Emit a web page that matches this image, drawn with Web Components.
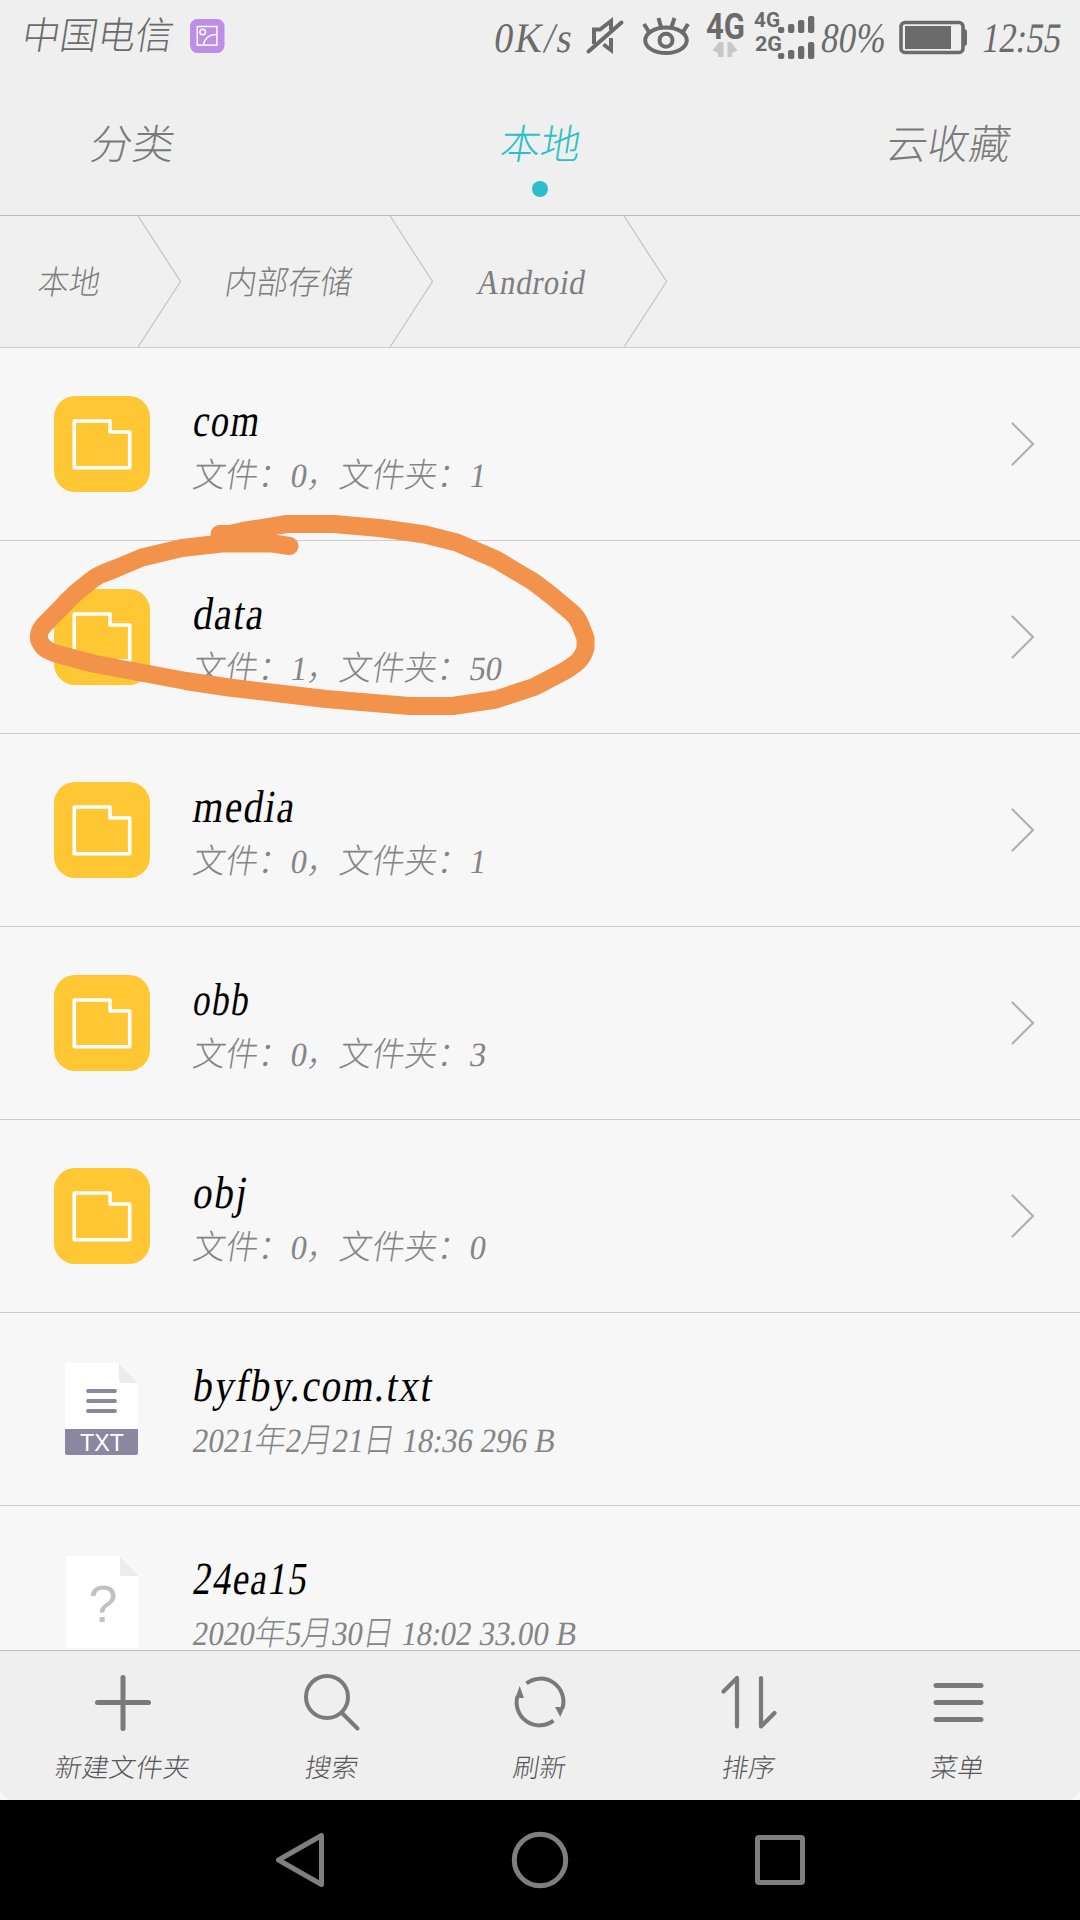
<!DOCTYPE html>
<html lang="zh-CN">
<head>
<meta charset="utf-8">
<title>文件管理</title>
<style>
  body {
    margin: 0;
    width: 1080px;
    height: 1920px;
    overflow: hidden;
    font-family: "Liberation Serif", "Noto Sans CJK SC", serif;
    font-weight: 300;
  }
</style>
</head>
<body>
<file-manager></file-manager>

<script>
// condensed, slanted text squeezed to the width given in the "w" attribute
class SlantText extends HTMLElement {
  constructor() {
    super();
    this.attachShadow({ mode: "open" });
    this.shadowRoot.innerHTML = `
<style>
  :host {
    display: block;
    flex: none;
    white-space: nowrap;
  }

  span {
    display: inline-block;
    vertical-align: top;
    transform-origin: 0 calc(50% + 0.34em);
  }
</style>
<span><slot></slot></span>
`;
  }

  connectedCallback() {
    const span = this.shadowRoot.querySelector("span");
    const w = Number(this.getAttribute("w"));
    const scale = w / span.offsetWidth;
    this.style.width = w + "px";
    span.style.transform = `translateX(-1.5px) skewX(-9deg) scaleX(${scale})`;
  }
}
window.customElements.define("slant-text", SlantText);

class StatusBar extends HTMLElement {
  constructor() {
    super();
    this.attachShadow({ mode: "open" });
    this.shadowRoot.innerHTML = `
<style>
  :host {
    display: flex;
    height: 76px;
    padding: 0 19px 0 22px;
    box-sizing: border-box;
    color: #6b6b6b;
    font-size: 42px;
    line-height: 76px;
  }

  .carrier {
    font-size: 38px;
    line-height: 72px;
    margin-right: 17px;
  }

  .speed {
    margin-left: auto;
    letter-spacing: 2px;
  }

  svg {
    flex: none;
    display: block;
  }

  text {
    font-family: Roboto, sans-serif;
    font-weight: 700;
    fill: #6b6b6b;
  }
</style>
<slant-text class="carrier" w="151">中国电信</slant-text>
<svg width="35" height="76" viewBox="190 0 35 76" fill="none" stroke="#fff" stroke-width="1.5">
  <rect x="190" y="19" width="34.5" height="34" rx="7.5" fill="#bd8de8" stroke="none"/>
  <rect x="197.3" y="26.5" width="19.6" height="18.6"/>
  <circle cx="202.7" cy="32" r="2.8"/>
  <path d="M203.5 45C204 39 209 34.5 216.5 34.5"/>
</svg>
<slant-text class="speed" w="79">0K/s</slant-text>
<svg width="248" height="76" viewBox="573 0 248 76" fill="none" stroke="#6b6b6b" stroke-width="4">
  <path d="M594 44V29.500H600L611 21V30M611 38V50L603.500 44.500"/>
  <path d="M588.500 51.500L621.500 22.500" stroke-linecap="round"/>
  <ellipse cx="666" cy="40.300" rx="20.800" ry="12.800"/>
  <circle cx="666" cy="40.300" r="6.500"/>
  <path d="M649 32L644 24M661 27L658.500 18M671.500 27L674.500 18M683 32L688 24"/>
  <g stroke="none">
    <text x="706" y="39" font-size="37" textLength="39" lengthAdjust="spacingAndGlyphs">4G</text>
    <path d="M712.500 50.500L719 42H723.500V57H718V53ZM737.500 50.500L731 42H727.500V57H732V53Z" fill="#c8c8c8"/>
    <text x="754" y="27" font-size="21" textLength="26" lengthAdjust="spacingAndGlyphs">4G</text>
    <text x="755" y="51" font-size="21" textLength="27" lengthAdjust="spacingAndGlyphs">2G</text>
    <g fill="#6b6b6b">
      <rect x="778" y="27" width="6.300" height="6" rx="2"/>
      <rect x="788" y="24" width="6.300" height="9" rx="2"/>
      <rect x="798" y="20" width="6.300" height="13" rx="2"/>
      <rect x="808" y="16" width="6.300" height="17" rx="2"/>
      <rect x="778" y="53" width="6.300" height="6" rx="2"/>
      <rect x="788" y="50" width="6.300" height="9" rx="2"/>
      <rect x="798" y="46" width="6.300" height="13" rx="2"/>
      <rect x="808" y="42" width="6.300" height="17" rx="2"/>
    </g>
  </g>
</svg>
<slant-text w="64">80%</slant-text>
<svg width="97" height="76" viewBox="884 0 97 76">
  <rect x="900" y="22.500" width="62" height="30" rx="4" fill="none" stroke="#6b6b6b" stroke-width="3.600"/>
  <rect x="904" y="26" width="46" height="23" fill="#6b6b6b"/>
  <path d="M963 29Q966 29 966 32V43Q966 46 963 46Z" fill="#6b6b6b"/>
</svg>
<slant-text w="79">12:55</slant-text>
`;
  }
}
window.customElements.define("status-bar", StatusBar);

class TabBar extends HTMLElement {
  constructor() {
    super();
    this.attachShadow({ mode: "open" });
    this.shadowRoot.innerHTML = `
<style>
  :host {
    display: flex;
    justify-content: space-between;
    height: 140px;
    padding: 41px 70px 0 90px;
    box-sizing: border-box;
    border-bottom: 1px solid #bcbcbc;
    color: #7a7a7a;
    font-size: 41px;
    line-height: 56px;
  }

  .active {
    display: flex;
    flex-direction: column;
    align-items: center;
    gap: 8px;
    margin-left: 20px;
    color: #2bc0c9;
  }

  i {
    width: 16px;
    height: 16px;
    border-radius: 50%;
    background: #2bc0c9;
  }
</style>
<slant-text w="84">分类</slant-text>
<div class="active"><slant-text w="80">本地</slant-text><i></i></div>
<slant-text w="124">云收藏</slant-text>
`;
  }
}
window.customElements.define("tab-bar", TabBar);

class PathCrumb extends HTMLElement {
  constructor() {
    super();
    this.attachShadow({ mode: "open" });
    this.shadowRoot.innerHTML = `
<style>
  :host {
    display: flex;
    height: 131px;
    font-size: 33px;
    line-height: 134px;
  }

  svg {
    display: block;
  }
</style>
<slant-text w="${this.getAttribute("w")}">${this.getAttribute("label")}</slant-text>
<svg width="83" height="131" viewBox="0 0 83 131" fill="none" stroke="#c6c6c6" stroke-width="1.3"><path d="M38 0L80.500 65.500L38 131"/></svg>
`;
  }
}
window.customElements.define("path-crumb", PathCrumb);

const icons = {
  folder: `
<svg width="96" height="96" viewBox="0 0 96 96">
  <rect width="96" height="96" rx="21" fill="#ffc734"/>
  <path d="M20.300 25H56V36H75.700V71.700H20.300Z" fill="none" stroke="#fff" stroke-width="3.600" stroke-linejoin="round"/>
</svg>`,
  txt: `
<svg width="96" height="96" viewBox="0 1 96 96">
  <path d="M13 3H65L84 22V69H11V5Q11 3 13 3Z" fill="#fff"/>
  <path d="M65 3L84 23H67Q65 23 65 21Z" fill="#ececec"/>
  <path d="M11 69H84V93Q84 95 82 95H13Q11 95 11 93Z" fill="#8b87a1"/>
  <path d="M34 31H61M34 41H61M34 51H61" stroke="#8b87a1" stroke-width="3.800" stroke-linecap="round"/>
  <text x="26" y="91" font-size="24" textLength="44" lengthAdjust="spacingAndGlyphs" font-family="Liberation Sans, sans-serif" fill="#fff">TXT</text>
</svg>`,
  unknown: `
<svg width="96" height="96" viewBox="0 1 96 96">
  <path d="M14 3H66L85 22V93Q85 95 83 95H14Q12 95 12 93V5Q12 3 14 3Z" fill="#fff"/>
  <path d="M66 3L85 23H68Q66 23 66 21Z" fill="#ececec"/>
  <text x="49" y="69" font-size="52" text-anchor="middle" font-family="Liberation Sans, sans-serif" fill="#c1c1c1">?</text>
</svg>`
};

class FileRow extends HTMLElement {
  constructor() {
    super();
    this.attachShadow({ mode: "open" });
    const kind = this.getAttribute("kind");
    this.shadowRoot.innerHTML = `
<style>
  :host {
    display: flex;
    height: 193px;
    padding: 0 45px 0 54px;
    box-sizing: border-box;
    border-bottom: 1px solid #cdcdcd;
  }

  svg {
    flex: none;
    display: block;
    margin-top: 48px;
  }

  .info {
    flex: 1;
    display: flex;
    flex-direction: column;
    gap: 9px;
    padding: 47px 0 0 43px;
  }

  .name {
    font-size: 46px;
    line-height: 52px;
    font-weight: 400;
    letter-spacing: 2px;
    color: #000;
  }

  .detail {
    font-size: 34px;
    line-height: 40px;
    color: #858585;
  }
</style>
${icons[kind]}
<div class="info">
  <slant-text class="name" w="${this.getAttribute("nw")}">${this.getAttribute("name")}</slant-text>
  <slant-text class="detail" w="${this.getAttribute("dw")}">${this.getAttribute("detail")}</slant-text>
</div>
${kind === "folder" ? `<svg width="24" height="96" viewBox="0 0 24 96" fill="none" stroke="#b0b0b0" stroke-width="2.200" stroke-linecap="round"><path d="M1.500 27.500L22 48L1.500 68.500"/></svg>` : ""}
`;
  }
}
window.customElements.define("file-row", FileRow);

class ToolItem extends HTMLElement {
  constructor() {
    super();
    this.attachShadow({ mode: "open" });
    this.shadowRoot.innerHTML = `
<style>
  :host {
    flex: 1;
    display: flex;
    flex-direction: column;
    align-items: center;
    gap: 17px;
    font-size: 26px;
    line-height: 40px;
    color: #565656;
  }
</style>
<slot></slot>
<slant-text w="${this.getAttribute("w")}">${this.getAttribute("label")}</slant-text>
`;
  }
}
window.customElements.define("tool-item", ToolItem);

class ToolBar extends HTMLElement {
  constructor() {
    super();
    this.attachShadow({ mode: "open" });
    this.shadowRoot.innerHTML = `
<style>
  :host {
    display: block;
    height: 150px;
    background: #f7f7f7;
  }

  div {
    display: flex;
    height: 150px;
    padding: 21px 18px 0;
    box-sizing: border-box;
    border-top: 1px solid #bcbcbc;
    border-radius: 0 0 14px 14px;
    background: #efefef;
  }

  svg {
    display: block;
    fill: none;
    stroke: #7a7a7a;
    stroke-width: 4.500;
    stroke-linecap: round;
    stroke-linejoin: round;
  }
</style>
<div>
  <tool-item label="新建文件夹" w="135">
    <svg width="60" height="60" viewBox="0 0 60 60" style="stroke-width:5"><path d="M31 5.500V56.500M5.500 30.500H56.500"/></svg>
  </tool-item>
  <tool-item label="搜索" w="53">
    <svg width="60" height="60" viewBox="0 0 60 60" style="stroke-width:4"><circle cx="26" cy="25" r="21"/><path d="M41 41L56.500 56.500"/></svg>
  </tool-item>
  <tool-item label="刷新" w="53">
    <svg width="60" height="60" viewBox="0 0 60 60" style="stroke-width:4;stroke-linecap:butt">
      <path d="M16.500 11.300A23 23 0 0 1 52.500 36"/>
      <path d="M43.500 48.700A23 23 0 0 1 7.500 24"/>
      <path d="M9.700 14L14 26L5.500 26ZM50.300 45L45 35L54.500 35Z" fill="#7a7a7a" stroke="none"/>
    </svg>
  </tool-item>
  <tool-item label="排序" w="53">
    <svg width="60" height="60" viewBox="0 0 60 60" style="stroke-width:4.200"><path d="M4.500 19.500L18 6V54.500M42 6V54.500L55.500 41"/></svg>
  </tool-item>
  <tool-item label="菜单" w="53">
    <svg width="60" height="60" viewBox="0 0 60 60" style="stroke-width:5"><path d="M8 13.500H53M8 30.500H53M8 47.500H53"/></svg>
  </tool-item>
</div>
`;
  }
}
window.customElements.define("tool-bar", ToolBar);

class NavKeys extends HTMLElement {
  constructor() {
    super();
    this.attachShadow({ mode: "open" });
    this.shadowRoot.innerHTML = `
<style>
  :host {
    display: flex;
    justify-content: center;
    align-items: center;
    gap: 180px;
    height: 120px;
    background: #000;
  }

  svg {
    fill: none;
    stroke: #7f7f7f;
    stroke-width: 5;
    stroke-linejoin: round;
  }
</style>
<svg width="60" height="60" viewBox="0 0 60 60"><path d="M8.500 30L51.500 5.500V54.500Z"/></svg>
<svg width="60" height="60" viewBox="0 0 60 60"><circle cx="30" cy="30" r="25.700"/></svg>
<svg width="60" height="60" viewBox="0 0 60 60"><rect x="7.500" y="7.500" width="45" height="45" rx="1.500"/></svg>
`;
  }
}
window.customElements.define("nav-keys", NavKeys);

// hand-drawn loop around one of the rows
class MarkerLoop extends HTMLElement {
  constructor() {
    super();
    this.attachShadow({ mode: "open" });
    this.shadowRoot.innerHTML = `
<style>
  :host {
    display: block;
    position: absolute;
    left: 0;
    top: 500px;
    pointer-events: none;
  }

  svg {
    display: block;
  }
</style>
<svg width="620" height="230" viewBox="0 500 620 230">
  <path fill="none" stroke="#f3924a" stroke-width="18" stroke-linecap="round" stroke-linejoin="round" d="M219.500 534H230L243 531L287 524H334L379.600 528L425 534.500L456.700 542.500L496 559.500L533.800 582L552 596L571 612Q577 617 580 624L585.500 638V648Q583 658 575 664Q566 671 557 675L534 687L496 699.500L452.700 706H409.300L326 699L229 687.500L186 681L146 673.500L95 664L59 654.500Q47 651 43 646.500Q38 640 39 636Q39 631 44 625L75 593.500L88 583Q97 575.500 103 573.500L117 568L142 557.500L182 548L221.500 543.500H273L289.500 546"/>
</svg>
`;
  }
}
window.customElements.define("marker-loop", MarkerLoop);

class FileManager extends HTMLElement {
  constructor() {
    super();
    this.attachShadow({ mode: "open" });
    this.shadowRoot.innerHTML = `
<style>
  :host {
    display: flex;
    flex-direction: column;
    position: relative;
    width: 1080px;
    height: 1920px;
    background: #efefef;
  }

  nav {
    display: flex;
    gap: 42px;
    height: 131px;
    padding-left: 38px;
    border-bottom: 1px solid #cdcdcd;
    background: #f0f0f0;
    color: #7d7d7d;
  }

  path-crumb {
    flex: none;
  }

  path-crumb:last-child {
    font-size: 35px;
    letter-spacing: 1px;
  }

  main {
    flex: 1;
    min-height: 0;
    overflow: hidden;
    background: #f7f7f7;
  }
</style>
<status-bar></status-bar>
<tab-bar></tab-bar>
<nav>
  <path-crumb label="本地" w="62"></path-crumb>
  <path-crumb label="内部存储" w="127"></path-crumb>
  <path-crumb label="Android" w="109"></path-crumb>
</nav>
<main>
  <file-row kind="folder" name="com" nw="67" detail="文件：0，文件夹：1" dw="293"></file-row>
  <file-row kind="folder" name="data" nw="72" detail="文件：1，文件夹：50" dw="309"></file-row>
  <file-row kind="folder" name="media" nw="102" detail="文件：0，文件夹：1" dw="293"></file-row>
  <file-row kind="folder" name="obb" nw="57" detail="文件：0，文件夹：3" dw="293"></file-row>
  <file-row kind="folder" name="obj" nw="55" detail="文件：0，文件夹：0" dw="293"></file-row>
  <file-row kind="txt" name="byfby.com.txt" nw="240" detail="2021年2月21日 18:36 296 B" dw="363"></file-row>
  <file-row kind="unknown" name="24ea15" nw="115" detail="2020年5月30日 18:02 33.00 B" dw="384"></file-row>
</main>
<tool-bar></tool-bar>
<nav-keys></nav-keys>
<marker-loop></marker-loop>
`;
  }
}
window.customElements.define("file-manager", FileManager);
</script>
</body>
</html>
